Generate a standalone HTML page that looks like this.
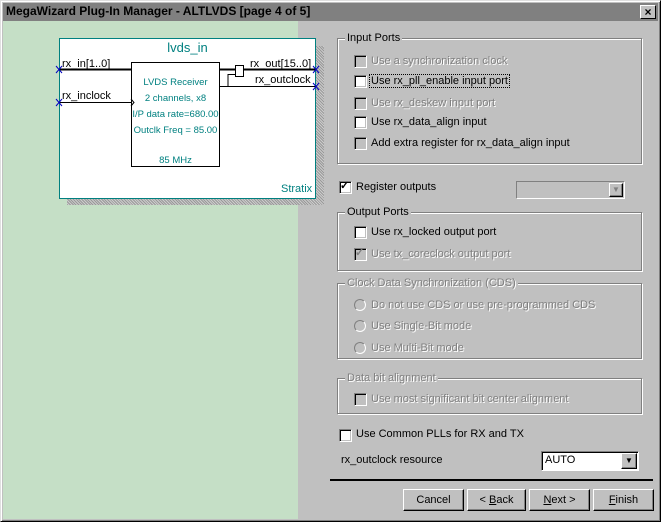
<!DOCTYPE html>
<html><head><style>
*{margin:0;padding:0;box-sizing:border-box}
body{width:661px;height:522px;background:#c0c0c0;font-family:"Liberation Sans",sans-serif;font-size:11px;color:#000;position:relative;overflow:hidden}
.a{position:absolute;white-space:nowrap}
.win{left:0;top:0;width:661px;height:522px;border:1px solid;border-color:#dfdfdf #000 #000 #dfdfdf;box-shadow:inset 1px 1px #fff,inset -1px -1px #808080}
.title{left:3px;top:3px;width:655px;height:18px;background:#808080;font-weight:bold;font-size:12px;color:#000;padding:1px 0 0 3px}
.xb{right:5px;top:5px;width:16px;height:14px;background:#c0c0c0;border:1px solid;border-color:#fff #000 #000 #fff;font-weight:bold;font-size:12px;text-align:center;line-height:12px}
.grp{border:1px solid #808080;box-shadow:1px 1px #fff,inset 1px 1px #fff}
.gl{background:#c0c0c0;padding:0 2px;top:-7px;left:7px;position:absolute}
.cb{width:13px;height:13px;background:#fff;border:1px solid;border-color:#808080 #fff #fff #808080;box-shadow:inset 1px 1px #000,inset -1px -1px #c0c0c0}
.cbd{background:#c0c0c0}
.dis{color:#808080;text-shadow:1px 1px #fff}
.rb{width:12px;height:12px;border-radius:50%;background:#c0c0c0;border:1px solid;border-color:#808080 #fff #fff #808080}
.btn{height:22px;border:1px solid;border-color:#fff #000 #000 #fff;box-shadow:inset -1px -1px #808080;text-align:center;line-height:20px}
.t{color:#008080}
</style></head><body>
<div class="a win"></div>
<div class="a title">MegaWizard Plug-In Manager - ALTLVDS [page 4 of 5]</div>
<div class="a xb">×</div>
<div class="a" style="left:3px;top:21px;width:295px;height:498px;background:#c5dfc6"></div>
<div class="a" style="left:67px;top:46px;width:257px;height:159px;background:repeating-linear-gradient(45deg,#999 0 1px,#ccc 1px 2px)"></div>
<div class="a" style="left:59px;top:38px;width:257px;height:161px;background:#fff;border:1px solid #008080"></div>
<div class="a t" style="left:59px;top:40px;width:257px;text-align:center;font-size:13px">lvds_in</div>
<div class="a t" style="left:281px;top:183px">Stratix</div>
<div class="a" style="left:131px;top:62px;width:89px;height:105px;border:1px solid #000"></div>
<div class="a t" style="left:131px;top:75px;width:89px;text-align:center;font-size:9.5px;line-height:16px">LVDS Receiver<br>2 channels, x8<br>I/P data rate=680.00<br>Outclk Freq = 85.00</div>
<div class="a t" style="left:131px;top:155px;width:89px;text-align:center;font-size:9.5px">85 MHz</div>
<svg class="a" style="left:0;top:0" width="330" height="210">
<line x1="59" y1="69.5" x2="131" y2="69.5" stroke="#000" stroke-width="2"/>
<line x1="59" y1="102.5" x2="131" y2="102.5" stroke="#000"/>
<polyline points="131,99 134,102.5 131,106" fill="none" stroke="#000"/>
<line x1="220" y1="69.5" x2="236" y2="69.5" stroke="#000" stroke-width="2"/>
<rect x="235.5" y="65.5" width="8" height="11" fill="#fff" stroke="#000"/>
<line x1="243" y1="69.5" x2="316" y2="69.5" stroke="#000" stroke-width="2"/>
<polyline points="220,86.5 316,86.5" fill="none" stroke="#000"/>
<polyline points="228,86 228,74.5 236,74.5" fill="none" stroke="#000"/>
<g stroke="#0000c0"><path d="M56 66l6 7M62 66l-6 7M56 99l6 7M62 99l-6 7M313 66l6 7M319 66l-6 7M313 83l6 7M319 83l-6 7"/></g>
<text x="62" y="67" font-size="11" font-family="Liberation Sans">rx_in[1..0]</text>
<text x="62" y="99" font-size="11" font-family="Liberation Sans">rx_inclock</text>
<text x="250" y="67" font-size="11" font-family="Liberation Sans">rx_out[15..0]</text>
<text x="255" y="83" font-size="11" font-family="Liberation Sans">rx_outclock</text>
</svg>

<div class="a grp" style="left:337px;top:38px;width:305px;height:126px"><span class="gl">Input Ports</span></div>
<div class="a cb cbd" style="left:354px;top:55px"></div><div class="a dis" style="left:371px;top:55px">Use a synchronization clock</div>
<div class="a cb" style="left:354px;top:75px"></div><div class="a" style="left:369px;top:74px;border:1px dotted #000;padding:0 1px">Use rx_pll_enable input port</div>
<div class="a cb cbd" style="left:354px;top:97px"></div><div class="a dis" style="left:371px;top:97px">Use rx_deskew input port</div>
<div class="a cb" style="left:354px;top:116px"></div><div class="a" style="left:371px;top:116px">Use rx_data_align input</div>
<div class="a cb cbd" style="left:354px;top:137px"></div><div class="a" style="left:371px;top:137px">Add extra register for rx_data_align input</div>

<div class="a cb" style="left:339px;top:181px;font-size:11px;line-height:9px;font-weight:bold">✓</div><div class="a" style="left:356px;top:181px">Register outputs</div>
<div class="a" style="left:516px;top:181px;width:109px;height:18px;border:1px solid;border-color:#808080 #fff #fff #808080"><div class="a btn" style="right:1px;top:1px;width:14px;height:14px;line-height:12px;font-size:8px;color:#808080">▼</div></div>

<div class="a grp" style="left:337px;top:212px;width:305px;height:59px"><span class="gl">Output Ports</span></div>
<div class="a cb" style="left:354px;top:226px"></div><div class="a" style="left:371px;top:226px">Use rx_locked output port</div>
<div class="a cb cbd" style="left:354px;top:248px;color:#808080;font-size:11px;line-height:9px;font-weight:bold">✓</div><div class="a dis" style="left:371px;top:248px">Use tx_coreclock output port</div>

<div class="a grp" style="left:337px;top:283px;width:305px;height:76px"><span class="gl dis">Clock Data Synchronization (CDS)</span></div>
<div class="a rb" style="left:354px;top:299px"></div><div class="a dis" style="left:371px;top:299px">Do not use CDS or use pre-programmed CDS</div>
<div class="a rb" style="left:354px;top:320px"></div><div class="a dis" style="left:371px;top:320px">Use Single-Bit mode</div>
<div class="a rb" style="left:354px;top:342px"></div><div class="a dis" style="left:371px;top:342px">Use Multi-Bit mode</div>

<div class="a grp" style="left:337px;top:378px;width:305px;height:36px"><span class="gl dis">Data bit alignment</span></div>
<div class="a cb cbd" style="left:354px;top:393px"></div><div class="a dis" style="left:371px;top:393px">Use most significant bit center alignment</div>

<div class="a cb" style="left:339px;top:429px"></div><div class="a" style="left:356px;top:428px">Use Common PLLs for RX and TX</div>
<div class="a" style="left:341px;top:454px">rx_outclock resource</div>
<div class="a" style="left:541px;top:451px;width:98px;height:20px;background:#fff;border:1px solid;border-color:#808080 #fff #fff #808080;box-shadow:inset 1px 1px #000;padding:2px 3px">AUTO<div class="a btn" style="right:1px;top:1px;width:16px;height:16px;line-height:14px;font-size:8px;background:#c0c0c0">▼</div></div>
<div class="a" style="left:330px;top:479px;width:323px;height:2px;background:#000"></div>
<div class="a btn" style="left:403px;top:489px;width:61px">Cancel</div>
<div class="a btn" style="left:467px;top:489px;width:59px">&lt; <u>B</u>ack</div>
<div class="a btn" style="left:529px;top:489px;width:61px"><u>N</u>ext &gt;</div>
<div class="a btn" style="left:593px;top:489px;width:61px"><u>F</u>inish</div>
</body></html>
